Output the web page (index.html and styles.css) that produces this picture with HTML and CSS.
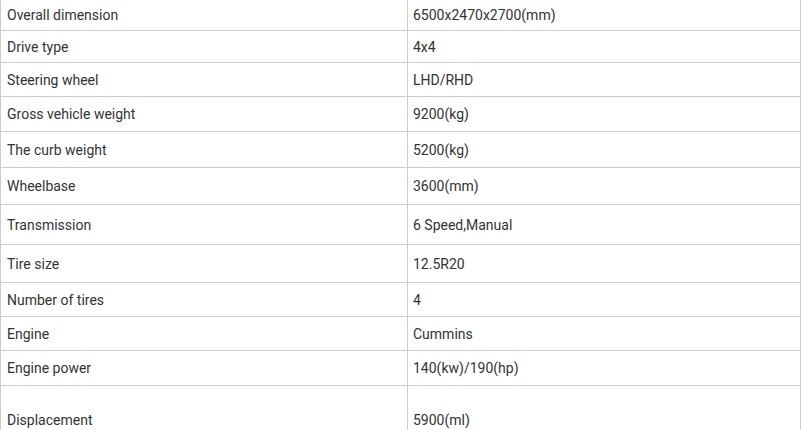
FILE: index.html
```html
<!DOCTYPE html>
<html>
<head>
<meta charset="utf-8">
<link rel="stylesheet" href="styles.css">
</head>
<body>
<div class="spec">
  <div class="row"><div class="key">Overall dimension</div><div class="val">6500x2470x2700(mm)</div></div>
  <div class="row"><div class="key">Drive type</div><div class="val">4x4</div></div>
  <div class="row"><div class="key">Steering wheel</div><div class="val">LHD/RHD</div></div>
  <div class="row"><div class="key">Gross vehicle weight</div><div class="val">9200(kg)</div></div>
  <div class="row"><div class="key">The curb weight</div><div class="val">5200(kg)</div></div>
  <div class="row"><div class="key">Wheelbase</div><div class="val">3600(mm)</div></div>
  <div class="row"><div class="key">Transmission</div><div class="val">6 Speed,Manual</div></div>
  <div class="row"><div class="key">Tire size</div><div class="val">12.5R20</div></div>
  <div class="row"><div class="key">Number of tires</div><div class="val">4</div></div>
  <div class="row"><div class="key">Engine</div><div class="val">Cummins</div></div>
  <div class="row"><div class="key">Engine power</div><div class="val">140(kw)/190(hp)</div></div>
  <div class="row last"><div class="key">Displacement</div><div class="val">5900(ml)</div></div>
</div>
</body>
</html>
```
FILE: styles.css
```css
html, body {
  margin: 0;
  padding: 0;
  background: #fff;
  overflow: hidden;
}
body {
  font-family: Roboto, "Liberation Sans", sans-serif;
  font-size: 14px;
  color: #333;
}
.spec {
  width: 801px;
  box-sizing: border-box;
  border-left: 1px solid #ccc;
  border-right: 1px solid #ccc;
  margin-top: -1px;
  border-top: 1px solid #ccc;
}
.row {
  display: grid;
  grid-template-columns: 407px 1fr;
  border-bottom: 1px solid #ccc;
  height: 30px;
}
.key, .val {
  display: flex;
  align-items: center;
  padding-left: 6px;
  box-sizing: border-box;
}
.val {
  padding-left: 5px;
}
.key {
  border-right: 1px solid #ccc;
}
.row:nth-child(2) { height: 31px; }
.row:nth-child(3) { height: 33px; }
.row:nth-child(4) { height: 34px; }
.row:nth-child(5) { height: 35px; }
.row:nth-child(6) { height: 36px; }
.row:nth-child(7) { height: 39px; }
.row:nth-child(8) { height: 37px; }
.row:nth-child(9) { height: 33px; }
.row:nth-child(10) { height: 33px; }
.row:nth-child(11) { height: 34px; }
.row.last { height: 60px; }
.row.last .key, .row.last .val {
  align-items: flex-start;
  padding-top: 26px;
}
```
